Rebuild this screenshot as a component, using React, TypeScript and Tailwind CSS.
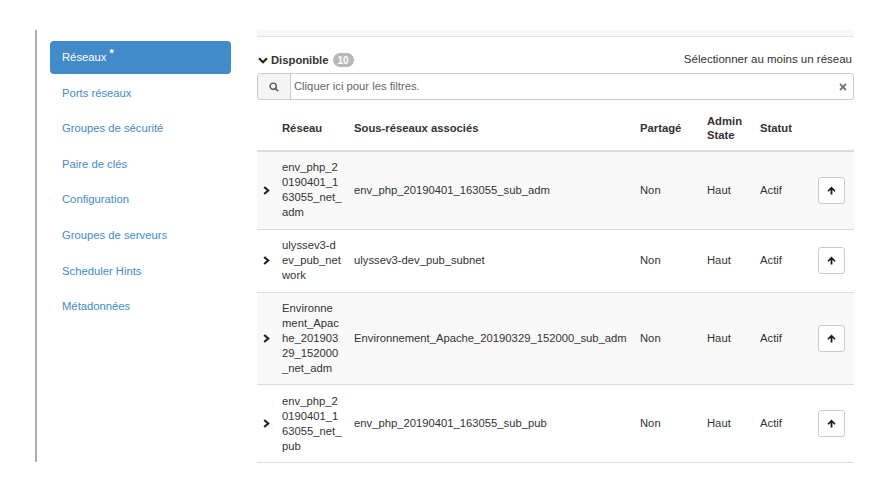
import React from "react";

const navItems = [
  "Ports réseaux",
  "Groupes de sécurité",
  "Paire de clés",
  "Configuration",
  "Groupes de serveurs",
  "Scheduler Hints",
  "Métadonnées",
];

interface NetworkRow {
  name: string[];
  subnet: string;
  shared: string;
  admin: string;
  status: string;
}

const rows: NetworkRow[] = [
  {
    name: ["env_php_2", "0190401_1", "63055_net_", "adm"],
    subnet: "env_php_20190401_163055_sub_adm",
    shared: "Non",
    admin: "Haut",
    status: "Actif",
  },
  {
    name: ["ulyssev3-d", "ev_pub_net", "work"],
    subnet: "ulyssev3-dev_pub_subnet",
    shared: "Non",
    admin: "Haut",
    status: "Actif",
  },
  {
    name: ["Environne", "ment_Apac", "he_201903", "29_152000", "_net_adm"],
    subnet: "Environnement_Apache_20190329_152000_sub_adm",
    shared: "Non",
    admin: "Haut",
    status: "Actif",
  },
  {
    name: ["env_php_2", "0190401_1", "63055_net_", "pub"],
    subnet: "env_php_20190401_163055_sub_pub",
    shared: "Non",
    admin: "Haut",
    status: "Actif",
  },
];

const cols = "grid grid-cols-[25px_72px_286px_67px_53px_58px_27px]";

function ChevronRight() {
  return (
    <svg className="w-[7px] h-[9px]" viewBox="0 0 7 9" fill="none">
      <path d="M1.2 1l4 3.5-4 3.5" stroke="#222" strokeWidth={2.2} strokeLinejoin="miter" />
    </svg>
  );
}

function ArrowUp() {
  return (
    <svg className="w-[9px] h-[9px]" viewBox="0 0 10 10" fill="#1a1a1a">
      <path d="M5 0.5L9.5 5.2 8.2 6.5 6 4.3V9.5H4V4.3L1.8 6.5 0.5 5.2z" />
    </svg>
  );
}

export default function App() {
  return (
    <div className="w-[883px] h-[496px] bg-white flex text-[#333] font-['Liberation_Sans',Arial,sans-serif] text-[11.25px]">
      <div className="ml-[35px] mt-[30px] h-[432px] w-[196px] border-l-2 border-[#adadad] pl-[13px] pt-[11px]">
        <div className="flex flex-col gap-[2.6px] w-[181px]">
          <div className="h-[33px] rounded-[4px] bg-[#428bca] text-white px-3 flex items-center">
            Réseaux
            <span className="ml-[3px] -mt-[8px] text-[11px] font-bold">*</span>
          </div>
          {navItems.map((item) => (
            <div key={item} className="h-[33px] px-3 flex items-center text-[#428bca]">
              {item}
            </div>
          ))}
        </div>
      </div>

      <div className="ml-[26px] mt-[30px] w-[597px]">
        <div className="h-[7px] bg-[#f8f8f8] border-b border-[#e3e3e3]" />

        <div className="mt-[15px] h-[16px] flex items-center justify-between">
          <div className="flex items-center">
            <svg className="w-[10px] h-[7px] ml-[1px] mr-[3px]" viewBox="0 0 10 7" fill="none">
              <path d="M1 1.2l4 4 4-4" stroke="#222" strokeWidth={2.2} />
            </svg>
            <span className="font-bold">Disponible</span>
            <span className="ml-[4px] h-[14px] px-[5px] rounded-full bg-[#b8b8b8] text-white font-bold text-[10px] flex items-center">
              10
            </span>
          </div>
          <span className="mr-[2px] text-[11.5px]">Sélectionner au moins un réseau</span>
        </div>

        <div className="mt-[5px] h-[27px] flex border border-[#ccc] rounded-[3px] overflow-hidden">
          <div className="w-[33px] bg-[#f4f4f4] border-r border-[#ccc] flex items-center justify-center">
            <svg className="w-[10px] h-[10px]" viewBox="0 0 10 10" fill="none">
              <circle cx="4.2" cy="4.2" r="3.1" stroke="#555" strokeWidth={1.4} />
              <path d="M6.5 6.5l2.6 2.6" stroke="#555" strokeWidth={1.6} />
            </svg>
          </div>
          <div className="flex-1 flex items-center pl-[3px] text-[#666]">Cliquer ici pour les filtres.</div>
          <div className="w-[20px] flex items-center justify-center">
            <svg className="w-[8px] h-[8px]" viewBox="0 0 8 8" fill="none">
              <path d="M1 1l6 6M7 1L1 7" stroke="#777" strokeWidth={1.8} />
            </svg>
          </div>
        </div>

        <div className={`${cols} mt-[6px] py-2 border-b-2 border-[#ddd] font-bold leading-[14px] items-center`}>
          <div />
          <div>Réseau</div>
          <div>Sous-réseaux associés</div>
          <div>Partagé</div>
          <div>
            Admin
            <br />
            State
          </div>
          <div>Statut</div>
          <div />
        </div>

        {rows.map((row, i) => (
          <div
            key={i}
            className={`${cols} py-[8.4px] border-b border-[#ddd] leading-[15px] items-center ${
              i % 2 === 0 ? "bg-[#f9f9f9]" : "bg-white"
            }`}
          >
            <div className="pl-[6px] flex items-center">
              <ChevronRight />
            </div>
            <div>
              {row.name.map((line, j) => (
                <div key={j}>{line}</div>
              ))}
            </div>
            <div className="whitespace-nowrap">{row.subnet}</div>
            <div>{row.shared}</div>
            <div>{row.admin}</div>
            <div>{row.status}</div>
            <div className="h-[27px] w-[27px] bg-white border border-[#ccc] rounded-[3px] flex items-center justify-center">
              <ArrowUp />
            </div>
          </div>
        ))}
      </div>
    </div>
  );
}
